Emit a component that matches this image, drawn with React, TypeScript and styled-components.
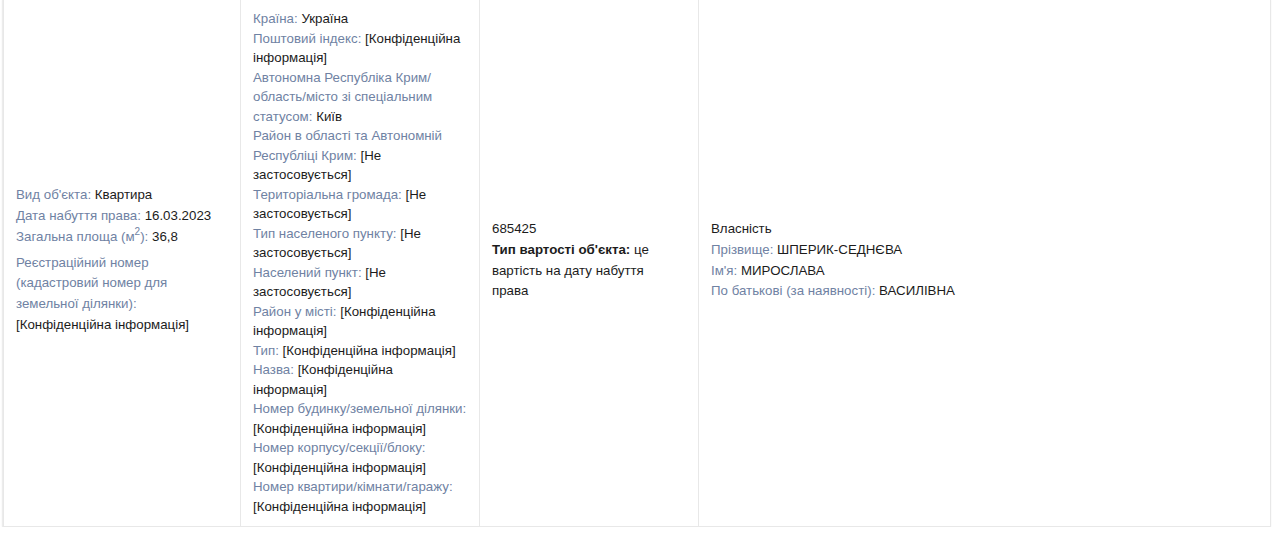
import styled, { createGlobalStyle } from "styled-components";

const GlobalStyle = createGlobalStyle`
  html, body {
    margin: 0;
    padding: 0;
    background: #ffffff;
  }
  body {
    font-family: "Liberation Sans", Arial, Helvetica, sans-serif;
    font-size: 13.3px;
    color: #1c1c1c;
  }
`;

type Field = { label: string; value: string };

const objectInfo: Field[] = [
  { label: "Вид об'єкта:", value: "Квартира" },
  { label: "Дата набуття права:", value: "16.03.2023" },
];

const address: Field[] = [
  { label: "Країна:", value: "Україна" },
  { label: "Поштовий індекс:", value: "[Конфіденційна інформація]" },
  {
    label: "Автономна Республіка Крим/ область/місто зі спеціальним статусом:",
    value: "Київ",
  },
  {
    label: "Район в області та Автономній Республіці Крим:",
    value: "[Не застосовується]",
  },
  { label: "Територіальна громада:", value: "[Не застосовується]" },
  { label: "Тип населеного пункту:", value: "[Не застосовується]" },
  { label: "Населений пункт:", value: "[Не застосовується]" },
  { label: "Район у місті:", value: "[Конфіденційна інформація]" },
  { label: "Тип:", value: "[Конфіденційна інформація]" },
  { label: "Назва:", value: "[Конфіденційна інформація]" },
  { label: "Номер будинку/земельної ділянки:", value: "[Конфіденційна інформація]" },
  { label: "Номер корпусу/секції/блоку:", value: "[Конфіденційна інформація]" },
  { label: "Номер квартири/кімнати/гаражу:", value: "[Конфіденційна інформація]" },
];

const owner: Field[] = [
  { label: "Прізвище:", value: "ШПЕРИК-СЕДНЄВА" },
  { label: "Ім'я:", value: "МИРОСЛАВА" },
  { label: "По батькові (за наявності):", value: "ВАСИЛІВНА" },
];

const App = () => {
  return (
    <>
      <GlobalStyle />
      <Card>
        <Table>
          <colgroup>
            <col style={{ width: 237 }} />
            <col style={{ width: 239 }} />
            <col style={{ width: 219 }} />
            <col />
          </colgroup>
          <tbody>
            <tr>
              <Cell>
                {objectInfo.map((f) => (
                  <Line key={f.label}>
                    <Label>{f.label}</Label> {f.value}
                  </Line>
                ))}
                <Line>
                  <Label>
                    Загальна площа (м<sup>2</sup>):
                  </Label>{" "}
                  36,8
                </Line>
                <Block>
                  <Label>Реєстраційний номер (кадастровий номер для земельної ділянки):</Label>{" "}
                  [Конфіденційна інформація]
                </Block>
              </Cell>
              <Cell $tight>
                {address.map((f) => (
                  <Line key={f.label}>
                    <Label>{f.label}</Label> {f.value}
                  </Line>
                ))}
              </Cell>
              <Cell $padRight={20}>
                <Line>685425</Line>
                <Line>
                  <Strong>Тип вартості об'єкта:</Strong> це вартість на дату набуття права
                </Line>
              </Cell>
              <Cell>
                <Line>Власність</Line>
                {owner.map((f) => (
                  <Line key={f.label}>
                    <Label>{f.label}</Label> {f.value}
                  </Line>
                ))}
              </Cell>
            </tr>
          </tbody>
        </Table>
      </Card>
    </>
  );
};

const Card = styled.div`
  margin: -2px 9px 0 2px;
  border-left: 1px solid #ececec;
  background: #f7f7f7;
  box-shadow: 0 1px 2px rgba(0, 0, 0, 0.05);
`;

const Table = styled.table`
  width: 100%;
  table-layout: fixed;
  border-collapse: collapse;
  background: #ffffff;
  border: 1px solid #e8e8e8;
`;

const Cell = styled.td<{ $tight?: boolean; $padRight?: number }>`
  vertical-align: middle;
  padding: 10px ${(p) => p.$padRight ?? 12}px ${(p) => (p.$tight ? 10 : 14)}px 12px;
  border-right: 1px solid #e8e8e8;
  line-height: ${(p) => (p.$tight ? "19.5px" : "20.8px")};
  overflow-wrap: break-word;

  &:last-child {
    border-right: none;
  }

  sup {
    font-size: 10px;
    line-height: 0;
    vertical-align: 6px;
  }
`;

const Line = styled.div`
  margin: 0;
`;

const Block = styled.div`
  margin-top: 5px;
`;

const Label = styled.span`
  color: #6f82a3;
`;

const Strong = styled.b`
  font-weight: 700;
  color: #1c1c1c;
`;

export default App;
